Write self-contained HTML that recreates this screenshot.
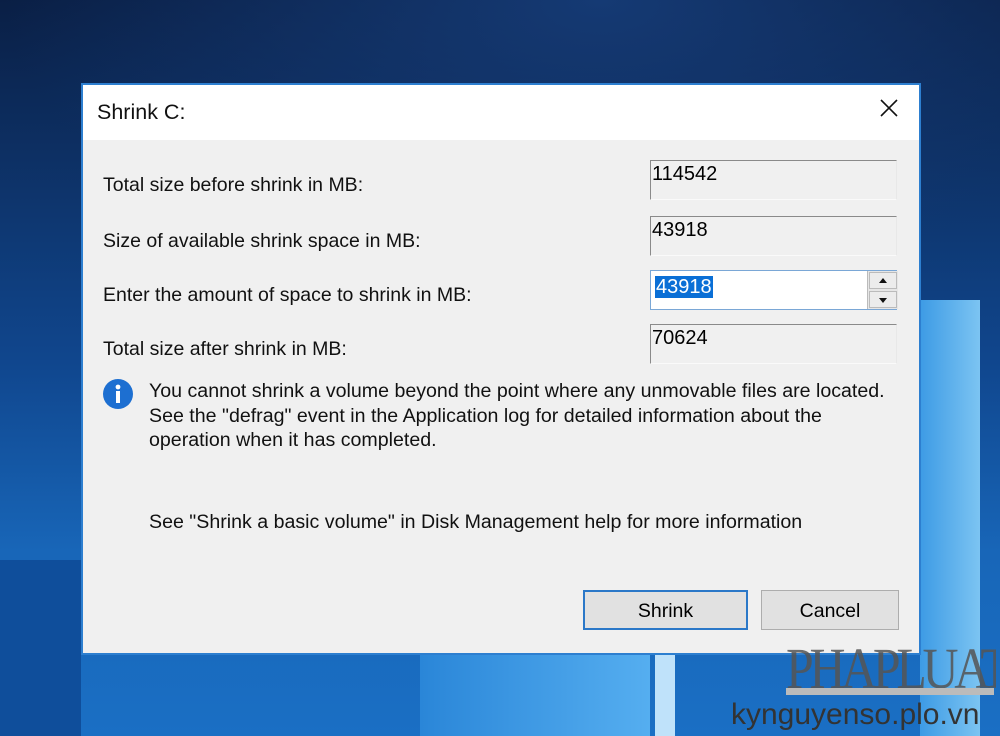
<!DOCTYPE html>
<html><head><style>
body{margin:0;width:1000px;height:736px;overflow:hidden;position:relative;font-family:"Liberation Sans",sans-serif;
background:linear-gradient(180deg,#0a1f45 0%,#0d2f62 20%,#10478f 50%,#1866b8 75%,#1a6fc4 100%);}
.abs{position:absolute}
.dlg{left:81px;top:83px;width:836px;height:568px;background:#f0f0f0;border:2px solid #2d7fd0;}
.title{left:0;top:0;width:836px;height:55px;background:#fff}
.lbl{font-size:19.5px;color:#111;left:20px}
.box{left:567px;width:247px;height:40px;border:1px solid #8a8a8a;border-right-color:#e8e8e8;border-bottom-color:#fafafa;font-size:20px;line-height:26px;padding-left:1px;box-sizing:border-box}
.btn{height:40px;border:1px solid #adadad;background:#e1e1e1;font-size:19.5px;text-align:center;line-height:42px;box-sizing:border-box}
p{margin:0}
</style></head><body>
<div class="abs" style="left:0;top:0;width:1000px;height:300px;background:radial-gradient(ellipse at 60% 0%,#153a74 0%,transparent 70%)"></div>
<div class="abs" style="left:920px;top:300px;width:60px;height:436px;background:linear-gradient(90deg,#3d9be5,#7cc4f2)"></div>
<div class="abs" style="left:420px;top:653px;width:230px;height:83px;background:linear-gradient(90deg,#2a86d8,#55aef0)"></div>
<div class="abs" style="left:655px;top:653px;width:20px;height:83px;background:#bfe2fa"></div>
<div class="abs" style="left:0;top:560px;width:81px;height:176px;background:#0f4e9b"></div>
<div class="abs dlg">
 <div class="abs title"><span class="abs" style="left:14px;top:15px;font-size:21.5px;color:#111">Shrink C:</span>
 <svg class="abs" style="left:796px;top:13px" width="20" height="20"><path d="M2 2L18 18M18 2L2 18" stroke="#111" stroke-width="1.6"/></svg></div>
 <div class="abs lbl" style="top:89px">Total size before shrink in MB:</div>
 <div class="abs lbl" style="top:145px">Size of available shrink space in MB:</div>
 <div class="abs lbl" style="top:199px">Enter the amount of space to shrink in MB:</div>
 <div class="abs lbl" style="top:253px">Total size after shrink in MB:</div>
 <div class="abs box" style="top:75px">114542</div>
 <div class="abs box" style="top:131px">43918</div>
 <div class="abs box" style="top:185px;background:#fff;border:1px solid #7aa7d6;line-height:32px;padding-left:4px"><span style="background:#0a6fd6;color:#fff;padding:0 1px">43918</span>
  <div class="abs" style="left:216px;top:0;width:30px;height:38px;background:#e6e6e6;border-left:1px solid #bbb">
   <div class="abs" style="left:1px;top:1px;width:28px;height:17px;border:1px solid #bbb;box-sizing:border-box;background:#ececec"></div>
   <div class="abs" style="left:1px;top:20px;width:28px;height:17px;border:1px solid #bbb;box-sizing:border-box;background:#ececec"></div>
   <svg class="abs" style="left:10px;top:6px" width="10" height="28"><path d="M1 6L5 1L9 6Z M1 21L9 21L5 26Z" fill="#111"/></svg>
  </div></div>
 <div class="abs box" style="top:239px">70624</div>
 <svg class="abs" style="left:19px;top:293px" width="32" height="32"><circle cx="16" cy="16" r="15" fill="#1d6fd1"/><circle cx="16" cy="9" r="2.4" fill="#fff"/><rect x="14" y="13" width="4" height="12" fill="#fff"/></svg>
 <div class="abs" style="left:66px;top:294px;font-size:19.6px;line-height:24.5px;color:#111;white-space:nowrap">
 <p>You cannot shrink a volume beyond the point where any unmovable files are located.</p>
 <p>See the "defrag" event in the Application log for detailed information about the</p>
 <p>operation when it has completed.</p></div>
 <div class="abs" style="left:66px;top:426px;font-size:19.6px;color:#111;white-space:nowrap">See "Shrink a basic volume" in Disk Management help for more information</div>
 <div class="abs btn" style="left:500px;top:505px;width:165px;border:2px solid #2b78c8;line-height:38px">Shrink</div>
 <div class="abs btn" style="left:678px;top:505px;width:138px;line-height:40px">Cancel</div>
</div>
<div class="abs" style="left:786px;top:640px;width:210px;height:50px;overflow:hidden"><div style="font-family:'Liberation Serif',serif;font-size:58px;line-height:58px;color:#555;letter-spacing:-5px;transform:scaleX(0.86);transform-origin:0 0;white-space:nowrap;opacity:.85">PHAPLUAT</div></div>
<div class="abs" style="left:786px;top:688px;width:208px;height:7px;background:#bbb"></div>
<div class="abs" style="left:731px;top:698px;font-size:30px;color:#333;white-space:nowrap">kynguyenso.plo.vn</div>
</body></html>
